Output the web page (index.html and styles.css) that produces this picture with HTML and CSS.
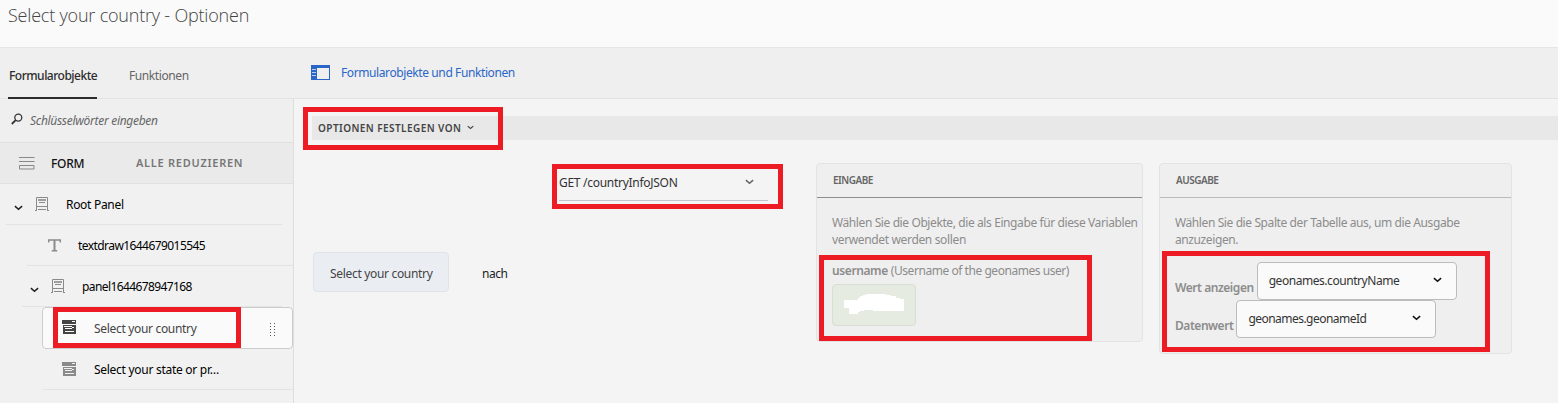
FILE: index.html
```html
<!DOCTYPE html>
<html lang="de">
<head>
<meta charset="utf-8">
<title>Select your country - Optionen</title>
<link rel="stylesheet" href="styles.css">
</head>
<body>
<svg class="defs" aria-hidden="true">
  <symbol id="chevron" viewBox="0 0 10 6"><path d="M1 1l4 3.400L9 1" fill="none" stroke="currentColor" stroke-width="1.700"/></symbol>
  <symbol id="panel" viewBox="0 0 14 15"><path d="M1.500 14V.5h11V14M1.500 9.500h11M3 12.500h8M4 5.500h6M0 13.500h2M12 13.500h2" fill="none" stroke="currentColor"/><path d="M3 3h8" stroke="currentColor" stroke-width="1.600"/></symbol>
  <symbol id="dropdown" viewBox="0 0 15 15"><path fill="currentColor" fill-rule="evenodd" d="M0 0h14v4H0zM10 1v1h3V1zM1 5h13v9H1zM2 6v1h8V6zM10 7v1h2V7zM3 8v1h7V8zM3 11v1h9v-1z"/></symbol>
</svg>
<header class="header"><h1 class="title">Select your country - Optionen</h1></header>
<div class="toolbar">
  <nav class="tabs">
    <a class="tab tab-active"><span class="t-tab1">Formularobjekte</span></a>
    <a class="tab"><span class="t-tab2">Funktionen</span></a>
  </nav>
  <a class="toggle">
    <svg width="19" height="15" viewBox="0 0 19 15"><path fill="#2a66c8" fill-rule="evenodd" d="M0 0h19v15H0zM6 3v11h12V3z"/><path d="M1 4.500h4M1 7.500h4M1 10.500h4" stroke="#b9cdf0"/></svg>
    <span class="t-toggle">Formularobjekte und Funktionen</span>
  </a>
</div>
<div class="workspace">
  <aside class="sidebar">
    <div class="search">
      <svg width="12" height="12" viewBox="0 0 12 12"><circle cx="7.300" cy="4.600" r="3.500" fill="none" stroke="#333" stroke-width="1.300"/><path d="M4.700 7.200L.8 11" stroke="#333" stroke-width="1.800"/></svg>
      <span class="t-search">Schlüsselwörter eingeben</span>
    </div>
    <div class="form-head">
      <svg width="16" height="13" viewBox="0 0 16 13"><path d="M0 .5h15.500M0 4.500h15.500M.5 8.500h14.500v3.500H.5z" fill="none" stroke="#888"/></svg>
      <span class="t-form">FORM</span>
      <span class="t-collapse">ALLE REDUZIEREN</span>
    </div>
    <div class="node node-root">
      <svg class="chev" width="9" height="6"><use href="#chevron"/></svg>
      <svg class="ic" width="14" height="15"><use href="#panel"/></svg>
      <span class="t-root">Root Panel</span>
    </div>
    <div class="node node-text">
      <svg class="ic" width="13" height="13" viewBox="0 0 13 13"><path d="M.7 3.500V1h11.600v2.500M3.800 11.800h5.400" fill="none" stroke="currentColor" stroke-width="1.400"/><path d="M6.500 1v11" stroke="currentColor" stroke-width="2"/></svg>
      <span class="t-draw">textdraw1644679015545</span>
    </div>
    <div class="node node-panel">
      <svg class="chev" width="9" height="6"><use href="#chevron"/></svg>
      <svg class="ic" width="14" height="15"><use href="#panel"/></svg>
      <span class="t-panel">panel1644678947168</span>
    </div>
    <div class="node node-selected">
      <svg class="ic" width="15" height="15"><use href="#dropdown"/></svg>
      <span class="t-country">Select your country</span>
      <svg class="grip" width="5" height="14" viewBox="0 0 5 14"><path d="M.5 0v14M4.500 0v14" stroke="#555" stroke-dasharray="1 2"/></svg>
      <i class="mark mark-country"></i>
    </div>
    <div class="node node-state">
      <svg class="ic" width="15" height="15"><use href="#dropdown"/></svg>
      <span class="t-state">Select your state or pr…</span>
    </div>
  </aside>
  <main class="editor">
    <div class="rule-bar">
      <span class="t-rule">OPTIONEN FESTLEGEN VON</span>
      <svg width="7" height="5"><use href="#chevron"/></svg>
      <i class="mark mark-rule"></i>
    </div>
    <div class="rule">
      <div class="source"><span class="chip"><span class="t-chip">Select your country</span></span><span class="t-nach">nach</span></div>
      <div class="service">
        <span class="t-get">GET /countryInfoJSON</span>
        <svg width="9" height="6"><use href="#chevron"/></svg>
        <i class="mark mark-service"></i>
      </div>
      <section class="card card-in">
        <h2 class="card-head"><span class="t-ein">EINGABE</span></h2>
        <p class="hint"><span class="t-in1">Wählen Sie die Objekte, die als Eingabe für diese Variablen</span><br><span class="t-in2">verwendet werden sollen</span></p>
        <div class="param"><b class="t-user">username</b><span class="t-desc">(Username of the geonames user)</span></div>
        <div class="value"><svg width="60" height="20" viewBox="0 0 60 20"><path fill="#fff" d="M0 6h14V4h2V2h3V1h3V0h20v1h5v1h5v2h4v1h4v12H29v-1h-9v1h-4v1h-2v2H5v-6H0z"/></svg></div>
        <i class="mark mark-in"></i>
      </section>
      <section class="card card-out">
        <h2 class="card-head"><span class="t-aus">AUSGABE</span></h2>
        <p class="hint"><span class="t-out1">Wählen Sie die Spalte der Tabelle aus, um die Ausgabe</span><br><span class="t-out2">anzuzeigen.</span></p>
        <div class="field"><b class="t-wert">Wert anzeigen</b><div class="select"><span class="t-name">geonames.countryName</span><svg width="9" height="6"><use href="#chevron"/></svg></div></div>
        <div class="field"><b class="t-daten">Datenwert</b><div class="select"><span class="t-id">geonames.geonameId</span><svg width="9" height="6"><use href="#chevron"/></svg></div></div>
        <i class="mark mark-out"></i>
      </section>
    </div>
  </main>
</div>
</body>
</html>
```
FILE: styles.css
```css
* { box-sizing: border-box; }
body { margin: 0; width: 1558px; height: 403px; overflow: hidden; background: #f4f4f4; font: 12px/18px "Noto Sans", "Open Sans", sans-serif; color: #111; white-space: nowrap; }
h1, h2, p { margin: 0; font-weight: normal; }
b { font-weight: 600; }
svg { flex: none; display: block; }
.defs { position: absolute; width: 0; height: 0; }

/* Header and toolbar */
.header { height: 48px; padding: 3px 0 0 8px; background: #fafafa; border-bottom: 1px solid #e6e6e6; }
.title { font: 300 18px/24px "Open Sans", sans-serif; color: #444; letter-spacing: -.2px; }
.toolbar { display: flex; height: 51px; background: #efefef; border-bottom: 1px solid #e3e3e3; }
.tabs { display: flex; width: 311px; padding-left: 8px; gap: 31px; }
.tab { height: 51px; padding: 19px 0 0 1px; color: #666; border-bottom: 2px solid transparent; }
.tab-active { width: 89px; color: #2c2c2c; border-color: #2c2c2c; font-weight: 500; }
.toggle { display: flex; gap: 11px; padding-top: 16px; color: #2a66c8; }
.toggle svg { margin-top: 1px; }

/* Object tree */
.workspace { display: flex; height: 304px; }
.sidebar { width: 294px; background: #f1f1f1; border-right: 1px solid #dedede; }
.search { display: flex; align-items: center; gap: 7px; height: 43px; padding-left: 11px; color: #666; font-style: italic; background: #efefef; }
.search svg { margin-top: -3px; }
.form-head { display: flex; align-items: center; height: 42px; padding-left: 19px; background: #eaeaea; border: solid #e0e0e0; border-width: 1px 0; }
.node { display: flex; align-items: center; height: 41px; border-bottom: 1px solid #e3e3e3; color: #000; }
.node > span { padding-top: 2px; }
.ic { color: #8a8a8a; }
.chev { color: #222; margin-top: 7px; }
.node-root { margin: 0 11px 0 6px; padding-left: 8px; }
.node-root .ic { margin: 0 17px 0 12px; }
.node-text { margin-left: 27px; padding-left: 21px; }
.node-text .ic { margin-right: 17px; }
.node-panel { margin: 0 11px 0 22px; padding-left: 8px; }
.node-panel .ic { margin: 0 17px 0 12px; }
.node-selected { position: relative; height: 42px; margin-left: 42px; padding-left: 20px; background: #fafafa; border: 1px solid #ccc; border-radius: 4px; color: #444; }
.node-selected .ic { color: #444; margin: -1px 17px 0 -1px; }
.node-selected .grip { margin-top: 3px; }
.node-state { margin-left: 43px; padding-left: 19px; }
.node-state .ic { margin-right: 17px; }

/* Highlight frames */
.mark { position: absolute; border: 5px solid #ed1c24; pointer-events: none; }
.mark-country { left: 10px; top: -1px; width: 188px; height: 41px; }
.mark-rule { left: -9px; top: -9px; width: 200px; height: 43px; }
.mark-service { left: -7px; top: -8px; width: 231px; height: 45px; }
.mark-in { left: 2px; top: 91px; width: 273px; height: 86px; }
.mark-out { left: 2px; top: 87px; width: 328px; height: 101px; }

/* Rule editor */
.editor { flex: 1; padding: 17px 0 0 18px; }
.rule-bar { position: relative; display: flex; align-items: center; gap: 6px; height: 24px; padding-left: 6px; background: #e8e8e8; color: #444; font-weight: 600; font-size: 10px; }
.rule-bar svg { margin-top: -1px; }
.rule { display: flex; align-items: flex-start; padding: 23px 0 0 1px; }
.source { display: flex; align-items: center; width: 246px; margin-top: 89px; }
.chip { display: flex; align-items: center; width: 136px; height: 40px; padding: 4px 0 0 16px; margin-right: 33px; background: #eaedf2; border: 1px solid #e0e4ea; border-radius: 4px; color: #444; }
.service { position: relative; display: flex; justify-content: space-between; align-items: center; width: 209px; height: 29px; margin-top: 9px; padding: 0 14px 8px 0; border-bottom: 1px solid #c0c3ce; color: #333; }
.service svg { color: #666; }
.card { position: relative; background: #efefef; border: 1px solid #e3e3e3; border-radius: 4px; color: #8c8c8c; }
.card-in { width: 327px; height: 179px; margin: 0 16px 0 48px; }
.card-out { width: 353px; height: 191px; }
.card-head { height: 34px; padding: 6px 0 0 16px; border-bottom: 1px solid #8d8d8d; color: #666; font: 600 10px/20px "Noto Sans", sans-serif; }
.card-out .card-head { border-color: #bbb; }
.hint { padding: 16px 0 0 15px; line-height: 17px; }
.param { display: flex; gap: 3px; padding: 14px 0 0 15px; }
.value { display: flex; width: 84px; height: 42px; margin: 4px 0 0 15px; padding: 9px 0 0 11px; background: #e5ebe1; border: 1px solid #d7ded2; border-radius: 4px; }
.field { display: flex; height: 38px; padding-left: 15px; gap: 3px; }
.field b { padding-top: 17px; }
.hint + .field { margin-top: 14px; }
.select { display: flex; justify-content: space-between; align-items: center; width: 200px; height: 38px; padding: 0 14px 2px 11px; background: #fafafa; border: 1px solid #bcbcbc; border-radius: 4px; color: #333; }
.select svg { color: #111; }
.select span { padding-top: 2px; }

/* Text tracking */
.t-tab1 { letter-spacing: -.5px; }
.t-tab2 { letter-spacing: -.4px; }
.t-toggle { letter-spacing: -.4px; }
.t-search { letter-spacing: -.3px; }
.t-form { width: 85px; margin-left: 16px; padding-top: 2px; font-weight: 500; letter-spacing: -.25px; }
.t-collapse { color: #777; font-weight: 600; font-size: 11px; letter-spacing: .73px; }
.t-root { letter-spacing: -.3px; }
.t-draw { letter-spacing: -.57px; }
.t-panel { letter-spacing: -.6px; }
.t-country { width: 176px; letter-spacing: -.32px; }
.t-state { letter-spacing: -.28px; }
.t-rule { letter-spacing: .43px; }
.t-chip { letter-spacing: -.32px; }
.t-nach { padding-top: 3px; letter-spacing: -.5px; color: #222; }
.t-get { padding-top: 2px; letter-spacing: -.28px; }
.t-ein, .t-aus { letter-spacing: -.5px; }
.t-in1, .t-out1 { letter-spacing: -.4px; }
.t-in2 { letter-spacing: -.35px; }
.t-out2 { letter-spacing: -.4px; }
.t-user { letter-spacing: -.4px; }
.t-desc { letter-spacing: -.45px; }
.t-wert, .t-daten { letter-spacing: -.45px; }
.t-name { letter-spacing: -.45px; }
.t-id { letter-spacing: -.53px; }
```
